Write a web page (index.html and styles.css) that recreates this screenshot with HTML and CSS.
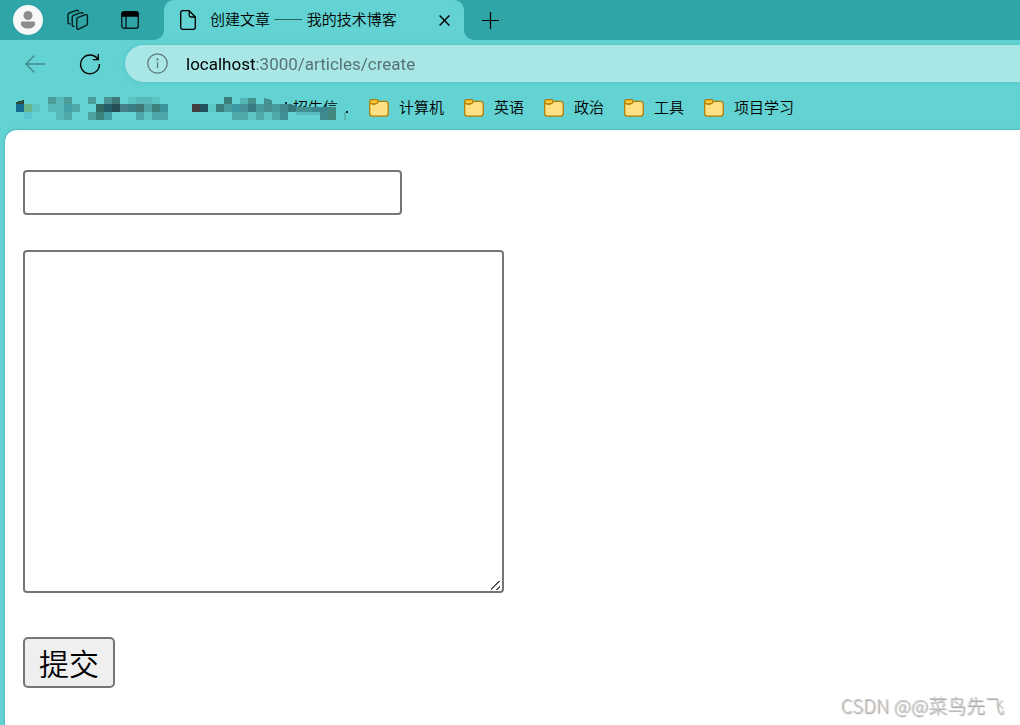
FILE: index.html
```html
<!DOCTYPE html>
<html lang="zh-CN">
<head>
<meta charset="utf-8">
<meta name="viewport" content="width=device-width, initial-scale=1">
<title>创建文章 —— 我的技术博客</title>
<link rel="stylesheet" href="styles.css">
</head>
<body>
<svg class="symbols" aria-hidden="true">
  <symbol id="folder" viewBox="0 0 20 18">
    <path d="M.7 3.5v11.3c0 1.400 1 2.400 2.400 2.400h13.700c1.400 0 2.400-1 2.400-2.400V4.700c0-1.400-1-2.400-2.400-2.400H8.500L5 5.500z" fill="#ffe083" stroke="#b07d09" stroke-width="1.300"/>
    <path d="M.7 3C.7 1.600 1.600.7 3 .7h4.200c1.200 0 1.900.6 1.900 1.500 0 1.600-1.200 2.600-3 2.600H2.600C1.400 4.800.7 4.200.7 3z" fill="#ffc937" stroke="#b07d09" stroke-width="1.300"/>
  </symbol>
</svg>
<header class="browser">
  <div class="tab-strip">
    <div class="strip-tools">
      <button class="icon-button avatar" type="button" aria-label="个人资料">
        <svg width="30" height="30" viewBox="0 0 30 30"><circle cx="15" cy="15" r="15" fill="#f8f8f8"/><circle cx="15" cy="10.500" r="4.500" fill="#8d8d8d"/><path d="M9.500 16.500h11c1 0 1.700.7 1.700 1.700 0 3.200-2.900 5.300-7.200 5.300s-7.200-2.100-7.200-5.300c0-1 .7-1.700 1.700-1.700z" fill="#8d8d8d"/></svg>
      </button>
      <button class="icon-button" type="button" aria-label="工作区">
        <svg width="22" height="22" viewBox="0 0 22 22" fill="none" stroke="#05201f" stroke-width="1.400" stroke-linejoin="round" stroke-linecap="round"><path d="M9.800 10.200c0-.9.400-1.500 1.200-1.800l7.700-2.700c1-.3 1.700.2 1.700 1.200v7.600c0 1-.4 1.600-1.300 1.900l-7.500 3.800c-1 .4-1.800 0-1.800-1.100z"/><path d="M6.900 17.300c-1 .2-1.700-.3-1.700-1.300V8.300c0-1 .4-1.600 1.200-1.900l7.600-2.700c1-.3 1.600 0 1.800.8M2.700 14.800c-.9.200-1.700-.3-1.700-1.300V5.900C1 4.900 1.400 4.300 2.200 4l7.300-2.600c1-.3 1.600 0 1.800.8"/></svg>
      </button>
      <button class="icon-button" type="button" aria-label="标签页操作菜单">
        <svg width="18" height="18" viewBox="0 0 18 18" fill="none" stroke="#05201f" stroke-width="1.400"><rect x=".7" y=".7" width="16.600" height="16.600" rx="2.500"/><path d="M5 5v12"/><path d="M1 5V3a2 2 0 0 1 2-2h12a2 2 0 0 1 2 2v2z" fill="#000" stroke="#000"/></svg>
      </button>
    </div>
    <div class="tab-slot">
      <div class="tab">
        <svg width="16" height="20" viewBox="0 0 16 20" fill="none" stroke="#000" stroke-width="1.300" stroke-linejoin="round"><path d="M2.700.7h6.500L15.300 7v10.300c0 1.200-.8 2-2 2H2.700c-1.200 0-2-.8-2-2V2.700c0-1.200.8-2 2-2z"/><path d="M9.200.7v4.500c0 1.100.7 1.800 1.800 1.800h4.300"/></svg>
        <span class="tab-title">创建文章 —— 我的技术博客</span>
        <button class="icon-button" type="button" aria-label="关闭标签页">
          <svg width="11" height="11" viewBox="0 0 11 11" stroke="#000" stroke-width="1.400"><path d="M.6.6l9.800 9.800M10.400.6L.6 10.400"/></svg>
        </button>
      </div>
    </div>
    <div class="strip-rest">
      <button class="icon-button" type="button" aria-label="新建标签页">
        <svg width="17" height="17" viewBox="0 0 17 17" stroke="#000" stroke-width="1.200"><path d="M8.500 0v17M0 8.500h17"/></svg>
      </button>
    </div>
  </div>

  <div class="toolbar">
    <button class="icon-button" type="button" aria-label="后退">
      <svg width="20" height="18" viewBox="0 0 20 18" fill="none" stroke="#41888a" stroke-width="1.300"><path d="M20 9H1M9.500.5L1 9l8.500 8.500"/></svg>
    </button>
    <button class="icon-button" type="button" aria-label="刷新">
      <svg width="22" height="22" viewBox="0 0 22 22" fill="none" stroke="#000" stroke-width="1.400"><path d="M18.600 5.800A9.400 9.400 0 1 0 20.400 11M19.300 1v5.600h-5.600"/></svg>
    </button>
    <div class="address">
      <svg width="21" height="21" viewBox="0 0 21 21" fill="none" stroke="#5d7878" stroke-width="1.300"><circle cx="10.500" cy="10.500" r="9.700"/><path d="M10.500 9.200v6"/><circle cx="10.500" cy="6.400" r=".5" fill="#5d7878"/></svg>
      <input class="url" type="text" aria-label="地址栏" value="localhost:3000/articles/create">
    </div>
  </div>

  <nav class="bookmarks" aria-label="收藏夹">
    <span class="masked">
      <svg class="mosaic" width="152" height="24" viewBox="16 97 152 24" shape-rendering="crispEdges" aria-hidden="true">
        <path d="M16 102l8-2v4h-8z" fill="#2d4b35"/>
        <path d="M16 104h8v8h-8z" fill="#156b94"/><path d="M24 104h8v8h-8z" fill="#65b789"/><path d="M32 104h8v8h-8z" fill="#5fc3c3"/><path d="M24 112h8v7h-8z" fill="#5ac6cf"/>
        <path d="M48 97h8v7h-8zM64 97h8v7h-8zM88 97h8v7h-8z" fill="#4c9c98"/>
        <path d="M56 97h8v7h-8zM48 104h16v8H48zM56 112h8v8h-8zM136 97h16v7h-16z" fill="#58bab8"/>
        <path d="M64 104h8v8h-8z" fill="#45a1a9"/><path d="M72 104h8v8h-8zM64 112h8v8h-8z" fill="#4fa7a7"/>
        <path d="M104 97h8v7h-8z" fill="#4a9294"/><path d="M112 97h8v7h-8z" fill="#3e7777"/><path d="M128 97h8v7h-8zM152 97h8v7h-8zM144 112h8v8h-8z" fill="#5cc5c4"/>
        <path d="M96 104h8v8h-8z" fill="#346a66"/><path d="M104 104h8v8h-8z" fill="#25606a"/><path d="M112 104h8v8h-8z" fill="#244f56"/><path d="M120 104h8v8h-8z" fill="#47808a"/><path d="M128 104h8v8h-8z" fill="#3b7e84"/><path d="M136 104h8v8h-8z" fill="#3f7776"/><path d="M144 104h8v8h-8z" fill="#4da3a3"/><path d="M152 104h8v8h-8z" fill="#3f827d"/><path d="M160 104h8v8h-8z" fill="#3e949e"/>
        <path d="M88 112h8v8h-8z" fill="#4ba19b"/><path d="M96 112h8v8h-8z" fill="#3a827c"/><path d="M104 112h8v8h-8z" fill="#429fa6"/><path d="M136 112h8v8h-8zM152 112h16v8h-16z" fill="#4da5a8"/>
      </svg>
    </span>
    <span class="masked partial">
      <span class="masked-text">招生信</span>
      <svg class="mosaic" width="160" height="24" viewBox="192 97 160 24" aria-hidden="true">
        <path d="M288 107h53v13h-53z" fill="#62d2d2"/>
        <g shape-rendering="crispEdges">
        <path d="M224 97h8v7h-8zM216 104h8v8h-8z" fill="#3a7f7b"/><path d="M192 104h8v8h-8z" fill="#453f42"/><path d="M200 104h8v8h-8z" fill="#21515f"/><path d="M208 104h8v8h-8z" fill="#5ac9c5"/>
        <path d="M240 98h8v6h-8z" fill="#55b5b2"/><path d="M248 98h8v6h-8z" fill="#469190"/><path d="M224 104h8v8h-8z" fill="#4a9d9d"/><path d="M232 104h8v8h-8z" fill="#3f98a5"/><path d="M240 104h8v8h-8z" fill="#46939a"/><path d="M248 104h8v8h-8z" fill="#3a7c82"/>
        <path d="M264 98l8 2v12h-8z" fill="#46908f"/><path d="M256 104h8v8h-8zM272 104h8v8h-8z" fill="#469a9a"/><path d="M280 104h8v8h-8z" fill="#40898d"/><path d="M288 104l8 1v7h-8z" fill="#37787c"/>
        <path d="M296 107h24v5h-24z" fill="#439090"/><path d="M312 107h24v5h-24z" fill="#3b858e"/>
        <path d="M232 112h16v8h-16zM256 112h8v8h-8zM272 112h8v8h-8z" fill="#4fa9a7"/><path d="M248 112h8v8h-8zM264 112h8v8h-8z" fill="#5cc5c4"/><path d="M280 112h8v8h-8z" fill="#3f8f97"/><path d="M296 112h24v3h-24z" fill="#59bfbe"/><path d="M320 112h8v8h-8z" fill="#3e8c90"/><path d="M328 107h8v13h-8z" fill="#43897f"/>
        <path d="M285 102h2v2h-2z" fill="#0b3534"/>
        <path d="M344 112h2v8h-2z" fill="#57b5b2"/><path d="M346 111h2v2h-2z" fill="#062221"/>
        </g>
      </svg>
    </span>
    <a class="bookmark" href="#"><svg class="folder"><use href="#folder"/></svg><span class="bookmark-name">计算机</span></a>
    <a class="bookmark" href="#"><svg class="folder"><use href="#folder"/></svg><span class="bookmark-name">英语</span></a>
    <a class="bookmark" href="#"><svg class="folder"><use href="#folder"/></svg><span class="bookmark-name">政治</span></a>
    <a class="bookmark" href="#"><svg class="folder"><use href="#folder"/></svg><span class="bookmark-name">工具</span></a>
    <a class="bookmark" href="#"><svg class="folder"><use href="#folder"/></svg><span class="bookmark-name">项目学习</span></a>
  </nav>
</header>

<main class="page">
  <form class="article-form">
    <input class="field title-field" type="text" name="title" aria-label="标题">
    <textarea class="field content-field" name="content" aria-label="内容"></textarea>
    <button class="submit" type="submit">提交</button>
  </form>
  <p class="watermark">CSDN @@菜鸟先飞</p>
</main>
</body>
</html>
```
FILE: styles.css
```css
* { box-sizing: border-box; }

body {
  margin: 0;
  min-height: 100vh;
  display: flex;
  flex-direction: column;
  background: #62d2d2;
  color: #000;
  font-family: "Noto Sans CJK SC", sans-serif;
  font-size: 15px;
  font-weight: 350;
}

.symbols { position: absolute; width: 0; height: 0; }
svg { display: block; flex: none; }

.icon-button {
  display: flex;
  align-items: center;
  justify-content: center;
  padding: 0;
  border: 0;
  background: none;
}

.tab-strip { display: flex; height: 40px; }

.strip-tools {
  display: flex;
  align-items: center;
  gap: 24px;
  width: 164px;
  padding-left: 13px;
  background: #30a5a8;
  border-bottom-right-radius: 10px;
}
.strip-tools .icon-button:last-child { margin-left: 8px; }

.tab-slot { width: 300px; background: linear-gradient(#30a5a8 50%, #62d2d2 50%); }

.tab {
  display: flex;
  align-items: center;
  height: 100%;
  padding: 0 14px 0 16px;
  background: #62d2d2;
  border-radius: 10px 10px 0 0;
}
.tab-title {
  flex: 1;
  margin-left: 14px;
  padding-bottom: 4px;
  white-space: nowrap;
}

.strip-rest {
  flex: 1;
  display: flex;
  align-items: center;
  padding-left: 18px;
  background: #30a5a8;
  border-bottom-left-radius: 10px;
}

.toolbar { display: flex; align-items: center; padding: 5px 0 4px 25px; }
.toolbar .icon-button + .icon-button { margin-left: 34px; }

.address {
  flex: 1;
  display: flex;
  align-items: center;
  gap: 18px;
  height: 37px;
  margin-left: 24px;
  padding-left: 22px;
  background: #a8e7e5;
  border-radius: 19px 0 0 19px;
  box-shadow: 0 0 5px #53bfc0;
}
.url {
  flex: 1;
  padding: 0;
  border: 0;
  outline: 0;
  font: 17px/24px Roboto, sans-serif;
  color: transparent;
  background: linear-gradient(90deg, #000 70px, #55706f 70px);
  -webkit-background-clip: text;
  background-clip: text;
}

.bookmarks {
  display: flex;
  align-items: center;
  height: 44px;
  padding-left: 16px;
  white-space: nowrap;
}
.masked { position: relative; margin-right: 24px; padding-top: 2px; }
.partial { margin-right: 17px; }
.partial .mosaic { position: relative; }
.masked-text { position: absolute; left: 101px; top: 1px; line-height: 22px; }
.bookmark {
  display: flex;
  align-items: center;
  gap: 10px;
  margin-right: 20px;
  color: inherit;
  text-decoration: none;
}
.bookmark-name { padding-bottom: 3px; }
.folder { width: 20px; height: 18px; }

.page {
  position: relative;
  flex: 1;
  margin-left: 5px;
  padding: 40px 18px;
  background: #fff;
  border-top-left-radius: 12px;
  box-shadow: 0 0 3px #45a9a9;
}

.article-form { display: flex; flex-direction: column; align-items: flex-start; }

.field {
  max-width: 100%;
  padding: 4px;
  border: 2px solid #767676;
  border-radius: 4px;
  background: #fff;
  font: 28px "Noto Sans CJK SC", sans-serif;
}
.title-field { width: 379px; height: 45px; }
.content-field { width: 481px; height: 343px; margin-top: 35px; resize: both; }
.content-field::-webkit-resizer {
  background: linear-gradient(to bottom right, transparent 43%, #555 43% 55%, transparent 55% 75%, #555 75% 87%, transparent 87%) 4px 5px / 9px 9px no-repeat;
}

.submit {
  margin-top: 44px;
  padding: 0 14px;
  border: 2px solid #767676;
  border-radius: 5px;
  background: #efefef;
  color: #000;
  font: 350 30px/47px "Noto Sans CJK SC", sans-serif;
}

.watermark {
  position: absolute;
  right: 16px;
  bottom: 9px;
  margin: 0;
  color: #ccc;
  font: 300 19px/28px "Noto Sans CJK SC", sans-serif;
  text-shadow: 1px 1px 1px #999;
}
```
